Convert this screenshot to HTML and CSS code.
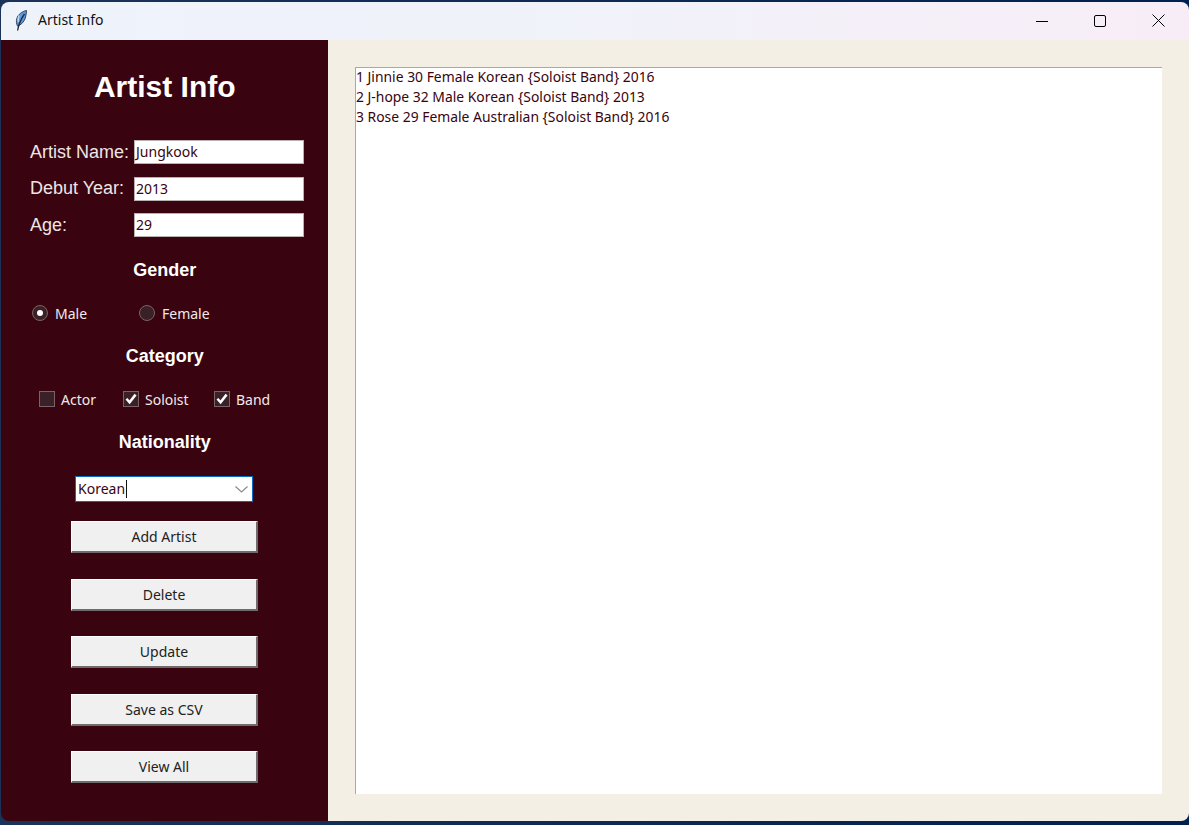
FILE: index.html
```html
<!DOCTYPE html>
<html lang="en">
<head>
<meta charset="utf-8">
<title>Artist Info</title>
<link rel="stylesheet" href="styles.css">
</head>
<body>
<div class="window">
  <header class="titlebar">
    <svg class="app-icon" width="16" height="22" viewBox="0 0 16 22" aria-hidden="true">
      <path d="M12.500 0.500 C8 1.500 4 4.500 2.800 8.500 C2 11.500 2.500 14 3.500 16 C7 15 10 12 11.300 8 C12 5.500 12.500 3 12.500 0.500Z" fill="#5a9ae0" stroke="#33465e" stroke-width="1"/>
      <path d="M5 5.500 C4 8 4 10 4.500 12" fill="none" stroke="#b8d6f5" stroke-width="1.500"/>
      <path d="M10.500 4 C8 7.500 5 12 3.600 20.500" fill="none" stroke="#1d2b3a" stroke-width="1.300"/>
    </svg>
    <span class="app-title">Artist Info</span>
    <div class="win-controls">
      <span class="win-btn"><svg width="12" height="12" viewBox="0 0 12 12"><path d="M0 6.500H12" stroke="#000" stroke-width="1"/></svg></span>
      <span class="win-btn"><svg width="12" height="12" viewBox="0 0 12 12"><rect x="0.500" y="0.500" width="11" height="11" rx="1.500" fill="none" stroke="#000"/></svg></span>
      <span class="win-btn"><svg width="13" height="13" viewBox="0 0 13 13"><path d="M0.500 0.500L12.500 12.500M12.500 0.500L0.500 12.500" stroke="#000"/></svg></span>
    </div>
  </header>
  <div class="content">
    <aside class="sidebar">
      <h1 class="heading">Artist Info</h1>
      <div class="fields">
        <div class="field"><span class="field-label">Artist Name:</span><span class="entry">Jungkook</span></div>
        <div class="field"><span class="field-label">Debut Year:</span><span class="entry">2013</span></div>
        <div class="field"><span class="field-label">Age:</span><span class="entry">29</span></div>
      </div>
      <h2 class="section section-gender">Gender</h2>
      <div class="radios">
        <label class="radio"><span class="radio-dot on"></span>Male</label>
        <label class="radio"><span class="radio-dot"></span>Female</label>
      </div>
      <h2 class="section section-category">Category</h2>
      <div class="checks">
        <label class="check check-actor"><span class="box"></span>Actor</label>
        <label class="check check-soloist"><span class="box"><svg width="12" height="12" viewBox="0 0 11 11"><path d="M1.300 5.300L4.200 8.500L9.700 1.500" fill="none" stroke="#fff" stroke-width="2.300"/></svg></span>Soloist</label>
        <label class="check"><span class="box"><svg width="12" height="12" viewBox="0 0 11 11"><path d="M1.300 5.300L4.200 8.500L9.700 1.500" fill="none" stroke="#fff" stroke-width="2.300"/></svg></span>Band</label>
      </div>
      <h2 class="section section-nationality">Nationality</h2>
      <div class="combo">
        <span class="combo-text">Korean</span><span class="caret"></span>
        <svg class="chevron" width="13" height="7" viewBox="0 0 13 7"><path d="M0.500 0.500L6.500 6L12.500 0.500" fill="none" stroke="#8a8a8a" stroke-width="1.200"/></svg>
      </div>
      <div class="actions">
        <button class="action">Add Artist</button>
        <button class="action">Delete</button>
        <button class="action">Update</button>
        <button class="action">Save as CSV</button>
        <button class="action">View All</button>
      </div>
    </aside>
    <main class="main">
      <div class="listing">
        <div>1 Jinnie 30 Female Korean {Soloist Band} 2016</div>
        <div>2 J-hope 32 Male Korean {Soloist Band} 2013</div>
        <div>3 Rose 29 Female Australian {Soloist Band} 2016</div>
      </div>
    </main>
  </div>
</div>
</body>
</html>
```
FILE: styles.css
```css
* { box-sizing: border-box; }
html, body { margin: 0; height: 825px; overflow: hidden; }
body {
  background: linear-gradient(90deg, #1b3358 0, #0f2a55 45%, #00204f 100%);
  padding: 2px 0 4px 1px;
  font-family: "Noto Sans", "Open Sans", sans-serif;
}
.window {
  height: 819px;
  display: flex;
  flex-direction: column;
  border-radius: 8px;
  overflow: hidden;
}
.titlebar {
  height: 38px;
  flex: none;
  display: flex;
  align-items: center;
  background: linear-gradient(90deg, #eef3fa 0%, #f1f2fa 50%, #f8edf7 100%);
  padding-left: 13px;
  color: #111;
}
.app-icon { flex: none; margin-right: 8px; }
.app-title { font-size: 14px; line-height: 18px; padding-bottom: 2px; }
.win-controls { margin-left: auto; display: flex; padding-right: 1px; }
.win-btn { width: 58.500px; height: 38px; display: flex; align-items: center; justify-content: center; padding-bottom: 1px; }
.content { flex: 1; display: flex; min-height: 0; }
.sidebar {
  width: 327px;
  flex: none;
  background: #39040f;
  color: #fff;
  display: flex;
  flex-direction: column;
  padding: 29px 0 0 0.500px;
}
.heading {
  margin: 0;
  font: bold 30px/36px "Liberation Sans", Arial, sans-serif;
  text-align: center;
}
.fields {
  margin-top: 35px;
  padding-left: 28px;
  display: flex;
  flex-direction: column;
  gap: 12.500px;
}
.field { display: flex; align-items: center; height: 24px; }
.field-label {
  width: 104.500px;
  padding-left: 0.500px;
  font: 18px "Liberation Sans", Arial, sans-serif;
  color: #eee6e6;
}
.entry {
  width: 169.500px;
  height: 24px;
  background: #fff;
  color: #39040f;
  border: 1px solid #b9b0b2;
  font-size: 14px;
  line-height: 22px;
  padding-left: 1px;
}
.section {
  margin: 0;
  font: bold 18px/24px "Liberation Sans", Arial, sans-serif;
  text-align: center;
}
.section-gender { margin-top: 21px; }
.section-category { margin-top: 19px; }
.section-nationality { margin-top: 19px; }
.radios {
  display: flex;
  margin-top: 19px;
  padding-left: 30.500px;
  height: 24px;
  align-items: center;
}
.radio {
  width: 107px;
  display: flex;
  align-items: center;
  font-size: 14px;
  color: #f2e9ea;
}
.radio-dot {
  width: 16px;
  height: 16px;
  border-radius: 50%;
  background: #3a2127;
  border: 1px solid #7a6368;
  margin-right: 7px;
  display: flex;
  align-items: center;
  justify-content: center;
}
.radio-dot.on::after {
  content: "";
  width: 6px;
  height: 6px;
  border-radius: 50%;
  background: #fff;
}
.checks {
  display: flex;
  margin-top: 19px;
  padding-left: 37.500px;
  height: 24px;
  align-items: center;
}
.check {
  display: flex;
  align-items: center;
  font-size: 14px;
  color: #f2e9ea;
}
.check-actor { width: 84px; }
.check-soloist { width: 91px; }
.box {
  width: 16px;
  height: 16px;
  background: #3a2127;
  border: 1px solid #7a6368;
  margin-right: 6px;
  display: flex;
  align-items: center;
  justify-content: center;
}
.combo {
  margin: 22px 0 0 73.500px;
  width: 178px;
  height: 26px;
  background: #fff;
  border: 1.500px solid #0a6cc0;
  display: flex;
  align-items: center;
  color: #39040f;
  font-size: 14px;
  padding-left: 2px;
}
.combo-text { line-height: 18px; padding-bottom: 1px; }
.caret { width: 1px; height: 18px; background: #111; margin-left: 1px; }
.chevron { margin-left: auto; margin-right: 4px; }
.actions {
  margin: 19px 0 0 69.500px;
  display: flex;
  flex-direction: column;
  gap: 25.500px;
}
.action {
  width: 187px;
  height: 32px;
  background: #f0f0f0;
  color: #222;
  border: none;
  border-top: 1px solid #fff;
  border-left: 1px solid #fff;
  border-right: 2px solid #6f6a6b;
  border-bottom: 2px solid #6f6a6b;
  font-family: "Noto Sans", "Open Sans", sans-serif;
  font-size: 14px;
  padding: 0;
}
.main {
  flex: 1;
  background: #f3efe5;
  padding: 27px 27px 27px 27px;
}
.listing {
  height: 727px;
  background: #fff;
  border-top: 1px solid #a8a8a8;
  border-left: 1px solid #a8a8a8;
  color: #39040f;
  font-size: 13.900px;
  line-height: 18px;
  display: flex;
  flex-direction: column;
  gap: 2px;
}
```
